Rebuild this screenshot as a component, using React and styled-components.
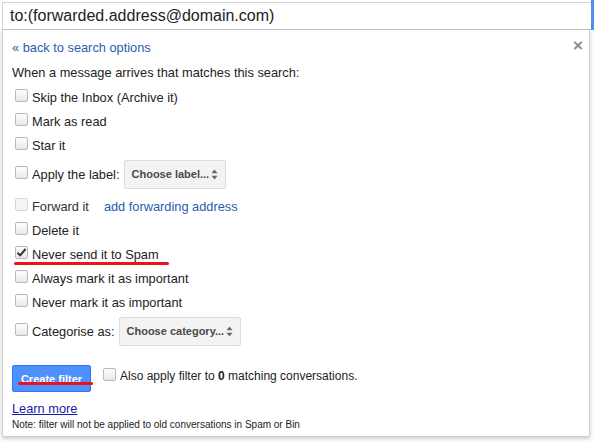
import styled, { createGlobalStyle, css } from "styled-components";

const GlobalStyle = createGlobalStyle`
  html, body {
    margin: 0;
    padding: 0;
    background: #ffffff;
  }
  body {
    font-family: Arial, "Liberation Sans", sans-serif;
    color: #222222;
  }
`;

const ACTIONS = [
  { label: "Skip the Inbox (Archive it)" },
  { label: "Mark as read" },
  { label: "Star it" },
  { label: "Apply the label:", select: "Choose label...", selectWidth: 102 },
  { label: "Forward it", disabled: true, link: "add forwarding address" },
  { label: "Delete it" },
  { label: "Never send it to Spam", checked: true, marked: true },
  { label: "Always mark it as important" },
  { label: "Never mark it as important" },
  { label: "Categorise as:", select: "Choose category...", selectWidth: 122 },
];

const Checkbox = ({ checked, disabled }) => (
  <Box $disabled={disabled}>
    {checked && (
      <svg width="11" height="11" viewBox="0 0 11 11">
        <path
          d="M1.5 5.8 L4.2 8.4 L9.6 1.8"
          fill="none"
          stroke="#333"
          strokeWidth="2"
        />
      </svg>
    )}
  </Box>
);

const SelectArrows = () => (
  <svg width="7" height="11" viewBox="0 0 7 11">
    <path d="M3.5 0.5 L6.5 4.3 L0.5 4.3 Z" fill="#666" />
    <path d="M3.5 10.5 L6.5 6.7 L0.5 6.7 Z" fill="#666" />
  </svg>
);

const App = () => {
  return (
    <>
      <GlobalStyle />
      <Page>
        <SearchBar>
          <SearchInput>to:(forwarded.address@domain.com)</SearchInput>
          <SearchButton />
        </SearchBar>
        <Panel>
          <HeaderRow>
            <BackLink>« back to search options</BackLink>
            <Close>×</Close>
          </HeaderRow>
          <Intro>When a message arrives that matches this search:</Intro>
          <Actions>
            {ACTIONS.map((a) => (
              <Row key={a.label} $tall={!!a.select} $marked={a.marked}>
                <Checkbox checked={a.checked} disabled={a.disabled} />
                <Label $disabled={a.disabled}>{a.label}</Label>
                {a.select && (
                  <Select style={{ width: a.selectWidth }}>
                    <span>{a.select}</span>
                    <SelectArrows />
                  </Select>
                )}
                {a.link && <InlineLink>{a.link}</InlineLink>}
              </Row>
            ))}
          </Actions>
          <Footer>
            <CreateButton>Create filter</CreateButton>
            <AlsoApply>
              <Checkbox />
              <Label $small>
                Also apply filter to <b>0</b> matching conversations.
              </Label>
            </AlsoApply>
          </Footer>
          <LearnMore>Learn more</LearnMore>
          <Note>
            Note: filter will not be applied to old conversations in Spam or
            Bin
          </Note>
        </Panel>
      </Page>
    </>
  );
};

export default App;

const Page = styled.div`
  width: 594px;
  height: 444px;
  padding-left: 2px;
  box-sizing: border-box;
  overflow: hidden;
`;

const SearchBar = styled.div`
  display: flex;
  height: 30px;
  padding-top: 2px;
  box-sizing: border-box;
`;

const SearchInput = styled.div`
  flex: 1;
  border: 1px solid #d4d4d4;
  border-bottom-color: #c0c0c0;
  border-right: none;
  font-size: 16px;
  line-height: 26px;
  padding-left: 7px;
  color: #222;
`;

const SearchButton = styled.div`
  width: 3px;
  margin-top: -2px;
  background: #4d8ef0;
`;

const Panel = styled.div`
  width: 588px;
  height: 407px;
  box-sizing: border-box;
  border: 1px solid #cfcfcf;
  border-top: none;
  box-shadow: 0 2px 4px rgba(0, 0, 0, 0.2);
  padding: 9px 8px 0 8px;
  background: #fff;
`;

const HeaderRow = styled.div`
  display: flex;
  justify-content: space-between;
  align-items: center;
  height: 16px;
`;

const BackLink = styled.span`
  font-size: 12.8px;
  color: #2a5db0;
  padding-left: 1px;
`;

const Close = styled.span`
  font-size: 17px;
  font-weight: bold;
  color: #8a8a8a;
  margin-top: -2px;
  margin-right: -2px;
`;

const Intro = styled.div`
  font-size: 12.8px;
  line-height: 16px;
  margin-top: 10px;
  padding-left: 1px;
`;

const Actions = styled.div`
  display: flex;
  flex-direction: column;
  margin-top: 4px;
`;

const Row = styled.div`
  position: relative;
  display: flex;
  align-items: center;
  height: 24px;
  padding-left: 4px;

  ${(p) =>
    p.$tall &&
    css`
      height: 34px;
      margin-bottom: 3px;
      &:last-child {
        margin-bottom: 0;
      }
    `}

  ${(p) =>
    p.$marked &&
    css`
      &::after {
        content: "";
        position: absolute;
        left: 3px;
        top: 20px;
        width: 155px;
        height: 3px;
        border-radius: 2px;
        background: #e8141a;
      }
    `}
`;

const Box = styled.span`
  display: inline-flex;
  align-items: center;
  justify-content: center;
  width: 11px;
  height: 11px;
  border: 1px solid #b9b9b9;
  border-radius: 2px;
  background: linear-gradient(#fdfdfd, #e9e9e9);
  flex-shrink: 0;
  margin-top: -3px;
  ${(p) =>
    p.$disabled &&
    css`
      border-color: #d8d8d8;
      background: #f4f4f4;
    `}
`;

const Label = styled.span`
  font-size: ${(p) => (p.$small ? "12px" : "12.8px")};
  margin-left: 4px;
  color: ${(p) => (p.$disabled ? "#333" : "#222")};
`;

const InlineLink = styled.span`
  font-size: 12.8px;
  color: #2a5db0;
  margin-left: 15px;
`;

const Select = styled.div`
  display: flex;
  align-items: center;
  justify-content: space-between;
  box-sizing: border-box;
  height: 29px;
  margin-left: 4px;
  padding: 0 7px 0 7px;
  background: #f3f3f3;
  border: 1px solid #dcdcdc;
  border-radius: 2px;
  font-size: 11px;
  font-weight: bold;
  color: #4a4a4a;
`;

const Footer = styled.div`
  display: flex;
  align-items: flex-start;
  margin-top: 17px;
`;

const CreateButton = styled.div`
  position: relative;
  box-sizing: border-box;
  width: 79px;
  height: 27px;
  margin-left: 1px;
  background: #4d90fe;
  border: 1px solid #3079ed;
  border-radius: 2px;
  color: #fff;
  font-size: 11px;
  font-weight: bold;
  display: flex;
  align-items: center;
  justify-content: center;

  &::after {
    content: "";
    position: absolute;
    left: 5px;
    top: 16px;
    width: 75px;
    height: 3px;
    border-radius: 2px;
    background: #e8141a;
  }
`;

const AlsoApply = styled.div`
  display: flex;
  align-items: center;
  margin-left: 12px;
  margin-top: 4px;

  ${Box} {
    margin-top: -4px;
  }
`;

const LearnMore = styled.div`
  font-size: 12.8px;
  color: #1a1aa6;
  text-decoration: underline;
  margin-top: 9px;
  padding-left: 1px;
`;

const Note = styled.div`
  font-size: 10px;
  color: #222;
  margin-top: 3px;
  padding-left: 1px;
`;
